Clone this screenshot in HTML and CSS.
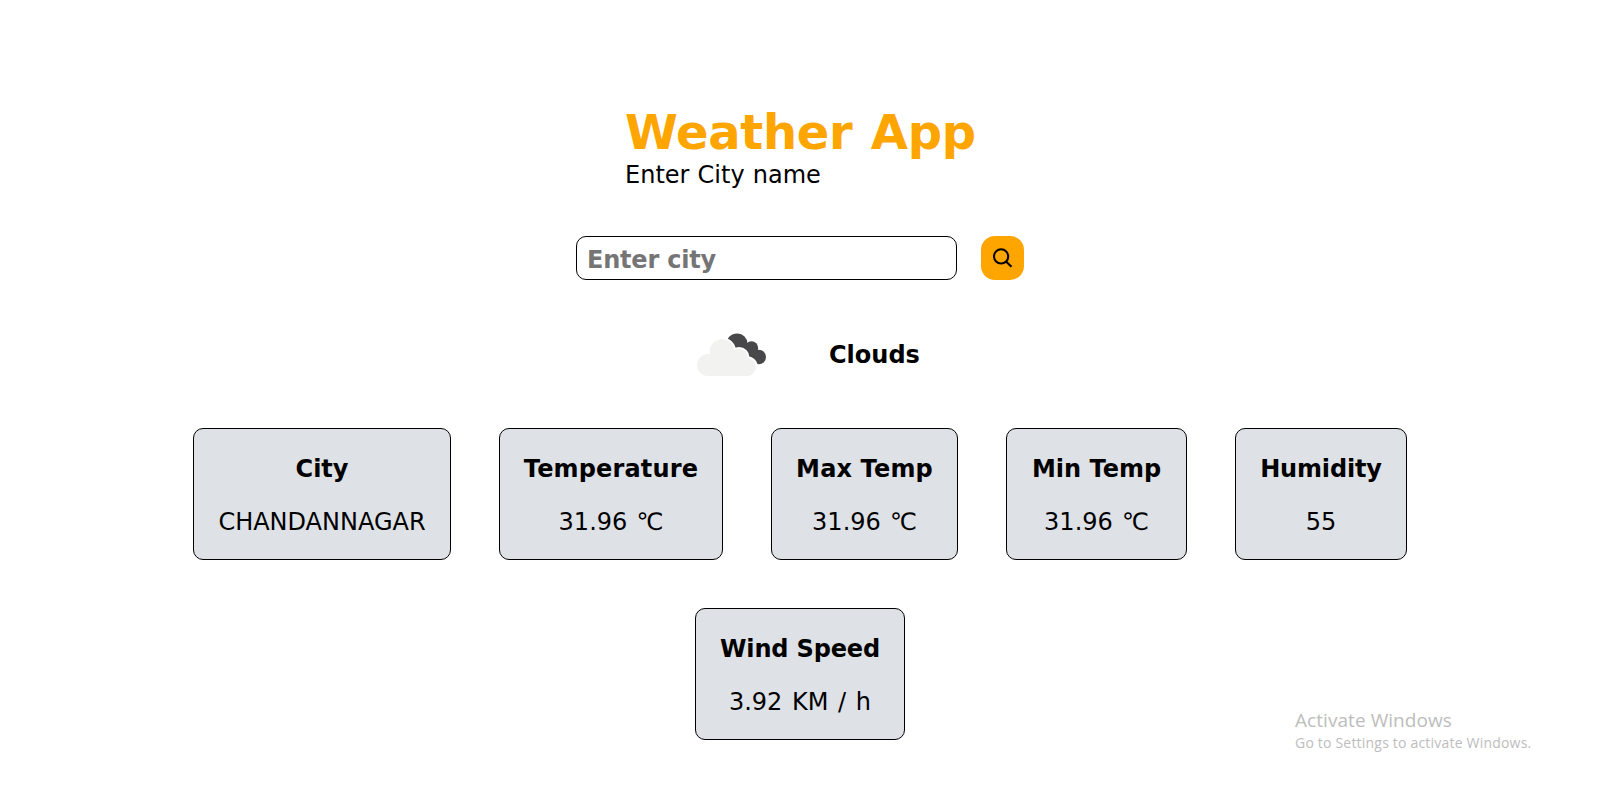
FILE: index.html
```html
<!DOCTYPE html>
<html lang="en">
<head>
<meta charset="utf-8">
<title>Weather App</title>
<link rel="stylesheet" href="styles.css">
</head>
<body>
<main class="app">
  <header class="heading">
    <h1 class="title">Weather App</h1>
    <p class="subtitle">Enter City name</p>
  </header>
  <form class="search">
    <input class="search-input" type="text" placeholder="Enter city">
    <button class="search-button" type="button" aria-label="Search">
      <svg width="20" height="20" viewBox="0 0 20 20" fill="none" stroke="#000" stroke-width="2.1"><circle cx="8.100" cy="8.400" r="7.100"/><path d="M13 13.400L18.500 18.800"/></svg>
    </button>
  </form>
  <section class="condition">
    <svg class="cloud" width="70" height="44" viewBox="0 0 70 44">
      <g fill="#48484a"><circle cx="40" cy="11" r="10.6"/><circle cx="54.500" cy="15" r="6.700"/><circle cx="61.700" cy="24" r="7.300"/><path d="M36 10h18l7 8v13H44z"/></g>
      <g fill="#f2f2f0" stroke="#fff" stroke-width="2"><circle cx="25" cy="18.500" r="13"/><circle cx="42" cy="24.500" r="9.500"/><circle cx="11" cy="32" r="11.500"/><circle cx="50" cy="34" r="9.800"/></g>
      <g fill="#f2f2f0"><circle cx="25" cy="18.500" r="12.300"/><circle cx="42" cy="24.500" r="8.700"/><circle cx="11" cy="32" r="11"/><circle cx="50" cy="34" r="9"/><path d="M11 22h34v21H11z"/><path d="M11 35h39v8H11z"/></g>
    </svg>
    <h2 class="condition-name">Clouds</h2>
  </section>
  <section class="cards">
    <article class="card city"><h2>City</h2><p>CHANDANNAGAR</p></article>
    <article class="card temperature"><h2>Temperature</h2><p>31.96 <span class="unit">℃</span></p></article>
    <article class="card max"><h2>Max Temp</h2><p>31.96 <span class="unit">℃</span></p></article>
    <article class="card min"><h2>Min Temp</h2><p>31.96 <span class="unit">℃</span></p></article>
    <article class="card humidity"><h2>Humidity</h2><p>55</p></article>
    <article class="card wind"><h2>Wind Speed</h2><p>3.92 KM / h</p></article>
  </section>
</main>
<aside class="notice">
  <p class="notice-title">Activate Windows</p>
  <p class="notice-text">Go to Settings to activate Windows.</p>
</aside>
</body>
</html>
```
FILE: styles.css
```css
* { box-sizing: border-box; margin: 0; padding: 0; }
body { height: 790px; overflow: hidden; background: #fff; color: #000; font: 24px/29px Verdana, "DejaVu Sans", sans-serif; }
h1, h2, p { white-space: nowrap; }
.app { display: flex; flex-direction: column; align-items: center; padding-top: 103px; }
.heading { width: 350px; }
.title { color: orange; font-size: 48px; line-height: 58px; letter-spacing: -0.3px; word-spacing: 2px; }
.subtitle { line-height: 29px; word-spacing: 0.5px; }
.search { display: flex; gap: 24px; margin-top: 46px; }
.search-input { width: 381px; height: 44px; padding: 3px 10px 0; border: 1px solid #000; border-radius: 10px; font: bold 24px/29px Verdana, "DejaVu Sans", sans-serif; letter-spacing: -0.2px; }
.search-input::placeholder { color: #757575; opacity: 1; }
.search-button { display: flex; align-items: center; justify-content: center; width: 43px; height: 44px; border: 0; border-radius: 14px; background: orange; }
.condition { display: flex; align-items: center; gap: 62px; width: 222px; height: 100px; margin: 24px 0 0 16px; padding-top: 1px; }
.condition-name { padding-top: 2px; font-size: 24px; }
.cloud { flex: none; }
.cards { display: flex; flex-wrap: wrap; justify-content: center; gap: 48px; width: 1400px; margin-top: 24px; }
.card { display: flex; flex-direction: column; align-items: center; gap: 24px; height: 132px; padding: 26px 0 24px; border: 1px solid #000; border-radius: 10px; background: #dee1e6; }
.card h2 { font-size: 24px; line-height: 29px; }
.city { width: 258px; }
.temperature { width: 224px; }
.temperature h2, .max h2 { letter-spacing: 0.15px; }
.max { width: 187px; }
.min { width: 181px; }
.humidity { width: 172px; }
.humidity h2, .wind h2 { letter-spacing: -0.15px; }
.wind { width: 210px; }
.wind p { word-spacing: 2px; }
.unit { margin-left: 1.500px; }
.notice { position: absolute; left: 1295px; top: 708px; color: #bdbdbd; font-family: "Segoe UI", "Open Sans", sans-serif; }
.notice-title { font-size: 19px; line-height: 25px; letter-spacing: 0.06px; }
.notice-text { font-size: 14px; line-height: 20px; letter-spacing: 0.2px; }
```
